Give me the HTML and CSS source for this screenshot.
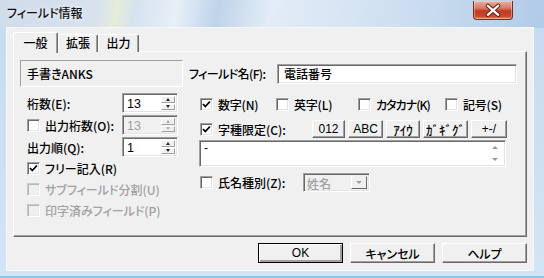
FILE: index.html
```html
<!DOCTYPE html>
<html lang="ja">
<head>
<meta charset="utf-8">
<title>フィールド情報</title>
<link rel="stylesheet" href="styles.css">
</head>
<body>
<div class="window">
  <div class="titlebar">
    <span class="title">フィールド情報</span>
    <span class="close">
      <svg width="40" height="19" viewBox="0 0 40 19">
        <path d="M14.5 4.5 L25.5 14 M25.5 4.5 L14.5 14" stroke="#5a1a10" stroke-width="4.4" stroke-linecap="round" fill="none"/>
        <path d="M14.5 4.5 L25.5 14 M25.5 4.5 L14.5 14" stroke="#ffffff" stroke-width="2.4" stroke-linecap="round" fill="none"/>
      </svg>
    </span>
  </div>
  <div class="framebody">
    <div class="client">
      <div class="tabs">
        <div class="tab active">一般</div>
        <div class="tab">拡張</div>
        <div class="tab">出力</div>
      </div>
      <div class="panel">
        <div class="col-left">
          <div class="static">手書きANKS</div>
          <div class="spinrows">
            <div class="srow">
              <span class="lbl">桁数(E):</span>
              <div class="spin"><span class="val">13</span><span class="spinbtns"><span class="sb up"></span><span class="sb dn"></span></span></div>
            </div>
            <div class="srow">
              <span class="lbl"><span class="cb"></span><span class="cbtext">出力桁数(O):</span></span>
              <div class="spin disabled"><span class="val">13</span><span class="spinbtns"><span class="sb up"></span><span class="sb dn"></span></span></div>
            </div>
            <div class="srow">
              <span class="lbl">出力順(Q):</span>
              <div class="spin"><span class="val">1</span><span class="spinbtns"><span class="sb up"></span><span class="sb dn"></span></span></div>
            </div>
          </div>
          <div class="chkrows">
            <div class="crow"><span class="cb checked"><svg width="9" height="9" viewBox="0 0 9 9"><path d="M1 4 L3.3 6.5 L8 1.5" stroke="#000" stroke-width="1.8" fill="none"/></svg></span><span class="cbtext">フリー記入(R)</span></div>
            <div class="crow disabled"><span class="cb"></span><span class="cbtext">サブフィールド分割(U)</span></div>
            <div class="crow disabled"><span class="cb"></span><span class="cbtext">印字済みフィールド(P)</span></div>
          </div>
        </div>
        <div class="col-right">
          <div class="namerow">
            <span class="lbl">フィールド名(F):</span>
            <div class="edit">電話番号</div>
          </div>
          <div class="typerow">
            <div class="crow"><span class="cb checked"><svg width="9" height="9" viewBox="0 0 9 9"><path d="M1 4 L3.3 6.5 L8 1.5" stroke="#000" stroke-width="1.8" fill="none"/></svg></span><span class="cbtext">数字(N)</span></div>
            <div class="crow"><span class="cb"></span><span class="cbtext">英字(L)</span></div>
            <div class="crow"><span class="cb"></span><span class="cbtext kana">カタカナ(K)</span></div>
            <div class="crow"><span class="cb"></span><span class="cbtext">記号(S)</span></div>
          </div>
          <div class="limitrow">
            <div class="crow limitchk"><span class="cb checked"><svg width="9" height="9" viewBox="0 0 9 9"><path d="M1 4 L3.3 6.5 L8 1.5" stroke="#000" stroke-width="1.8" fill="none"/></svg></span><span class="cbtext">字種限定(C):</span></div>
            <div class="tbtns">
              <span class="btn b1">012</span>
              <span class="btn b2">ABC</span>
              <span class="btn b3">ｱｲｳ</span>
              <span class="btn b4">ｶﾞｷﾞｸﾞ</span>
              <span class="btn b5">+-/</span>
            </div>
          </div>
          <div class="memo">
            <span class="memotext">-</span>
            <span class="vscroll"><span class="arr aup"></span><span class="arr adn"></span></span>
          </div>
          <div class="namekind">
            <div class="crow kindchk"><span class="cb"></span><span class="cbtext">氏名種別(Z):</span></div>
            <div class="combo"><span class="comboval">姓名</span><span class="combobtn"></span></div>
          </div>
        </div>
      </div>
      <div class="buttons">
        <span class="pbtn default">OK</span>
        <span class="pbtn">キャンセル</span>
        <span class="pbtn">ヘルプ</span>
      </div>
    </div>
  </div>
</div>
</body>
</html>
```
FILE: styles.css
```css
* { box-sizing: border-box; }
html, body { margin: 0; padding: 0; }
body {
  width: 544px;
  height: 278px;
  overflow: hidden;
  font-family: "Noto Sans CJK JP", "Noto Sans", sans-serif;
  font-size: 12px;
  font-weight: 500;
  font-feature-settings: "palt";
  color: #000;
  background: #c9dcf0;
}

.window {
  width: 544px;
  height: 278px;
  display: flex;
  flex-direction: column;
  background: linear-gradient(100deg, #cfdcea 0%, #d8e2ed 17%, #e6edd8 20%, #d5e2ef 23%, #e7eff8 30%, #bfd3e9 37%, #e3ecf7 46%, #d6e4f3 60%, #c5d9ee 76%, #b3cde9 90%, #a9c6e6 100%);
}

.titlebar {
  height: 28px;
  display: flex;
  align-items: flex-start;
  padding-left: 7px;
  flex: none;
}
.title {
  margin-top: 5px;
  font-size: 12px;
  line-height: 16px;
  color: #111;
  text-shadow: 0 0 6px rgba(255,255,255,0.9);
}
.close {
  margin-left: auto;
  margin-right: 31px;
  margin-top: 1px;
  width: 40px;
  height: 19px;
  border: 1px solid #7a2a1e;
  border-top: none;
  border-radius: 0 0 4px 4px;
  background: linear-gradient(#eab0a2 0%, #d97a64 40%, #c23a22 55%, #c9482c 85%, #e08a5a 100%);
  box-shadow: inset 0 0 0 1px rgba(255,255,255,0.35);
  display: flex;
}

.framebody {
  flex: 1;
  padding: 0 11px 8px 7px;
  display: flex;
  background: linear-gradient(#c7dbf0, #d3e4f6);
  box-shadow: inset 0 -2px 0 #86c8ec;
}

.client {
  flex: 1;
  background: #f0f0f0;
  padding: 3px 6px 7px 6px;
  display: flex;
  flex-direction: column;
  box-shadow: 0 0 0 1px #f4f8fc;
}

/* tabs */
.tabs {
  display: flex;
  align-items: flex-end;
  height: 21px;
  position: relative;
  z-index: 2;
}
.tab {
  height: 18px;
  padding: 0;
  line-height: 16px;
  white-space: nowrap;
  background: #f0f0f0;
  border-top: 1px solid #fff;
  border-left: 1px solid #fff;
  border-right: 1px solid #696969;
  box-shadow: inset -1px 0 0 #a0a0a0;
  border-radius: 2px 2px 0 0;
  text-align: center;
}
.tab:nth-child(2) { width: 40px; }
.tab:nth-child(3) { width: 41px; }
.tab.active {
  width: 45px;
  height: 21px;
  line-height: 20px;
  margin-bottom: -1px;
}

.panel {
  height: 186px;
  margin-top: -1px;
  border-top: 1px solid #fff;
  border-left: 1px solid #fff;
  border-right: 1px solid #696969;
  border-bottom: 1px solid #696969;
  box-shadow: inset -1px -1px 0 #a0a0a0;
  display: grid;
  grid-template-columns: 163px 328px;
  column-gap: 6px;
  padding: 8px 0 0 6px;
  align-content: start;
  align-items: start;
}

/* generic 3D */
.static {
  height: 27px;
  border: 1px solid;
  border-color: #a0a0a0 #fff #fff #a0a0a0;
  padding-left: 6px;
  display: flex;
  align-items: center;
}
.edit, .spin, .memo, .combo {
  border: 1px solid;
  border-color: #a0a0a0 #fff #fff #a0a0a0;
  box-shadow: inset 1px 1px 0 #696969, inset -1px -1px 0 #e3e3e3;
  background: #fff;
}

.cb {
  width: 13px;
  height: 13px;
  flex: none;
  border: 1px solid;
  border-color: #a0a0a0 #fff #fff #a0a0a0;
  box-shadow: inset 1px 1px 0 #696969, inset -1px -1px 0 #e3e3e3;
  background: #fff;
  display: flex;
  align-items: center;
  justify-content: center;
}
.cb svg { display: block; }
.crow {
  display: flex;
  align-items: center;
}
.crow .cbtext { margin-left: 5px; white-space: nowrap; }
.crow.disabled { color: #a0a0a0; }
.crow.disabled .cb {
  background: #f0f0f0;
  border-color: #c8c8c8 #fff #fff #c8c8c8;
  box-shadow: inset 1px 1px 0 #b4b4b4, inset -1px -1px 0 #eaeaea;
}

/* left column */
.col-left { display: flex; flex-direction: column; }
.spinrows {
  margin-top: 6px;
  display: flex;
  flex-direction: column;
  gap: 2px;
}
.srow {
  height: 20px;
  display: flex;
  align-items: center;
  justify-content: space-between;
  padding: 0 5px 0 7px;
}
.srow .lbl { display: flex; align-items: center; white-space: nowrap; }
.srow .lbl .cbtext { margin-left: 5px; }
.spin {
  width: 56px;
  height: 20px;
  display: flex;
  padding: 2px;
}
.val {
  flex: 1;
  font-family: "Liberation Sans", Arial, sans-serif;
  font-weight: 400;
  font-size: 12.5px;
  line-height: 16px;
  padding-left: 2px;
}
.spin.disabled { background: #f0f0f0; }
.spin.disabled .val { color: #a0a0a0; }
.spinbtns {
  width: 14px;
  display: flex;
  flex-direction: column;
  gap: 1px;
}
.sb {
  flex: 1;
  background: #f0f0f0;
  border: 1px solid;
  border-color: #fff #a0a0a0 #a0a0a0 #fff;
  display: flex;
  align-items: center;
  justify-content: center;
}
.sb::after {
  content: "";
  width: 0;
  height: 0;
  border-left: 2.5px solid transparent;
  border-right: 2.5px solid transparent;
}
.sb.up::after { border-bottom: 3px solid #222; }
.sb.dn::after { border-top: 3px solid #222; }
.spin.disabled .sb.up::after { border-bottom-color: #b0b0b0; }
.spin.disabled .sb.dn::after { border-top-color: #b0b0b0; }

.chkrows {
  margin-top: 1px;
  display: flex;
  flex-direction: column;
  gap: 1px;
}
.chkrows .crow { height: 20px; padding-left: 7px; }

/* right column */
.col-right { display: flex; flex-direction: column; }
.namerow {
  height: 27px;
  display: flex;
  align-items: center;
  justify-content: space-between;
}
.namerow .lbl { white-space: nowrap; letter-spacing: -0.6px; }
.edit {
  width: 240px;
  height: 20px;
  padding-left: 6px;
  line-height: 18px;
}

.typerow {
  margin-top: 7px;
  height: 20px;
  display: grid;
  grid-template-columns: 76px 82px 87px auto;
  padding-left: 11px;
}
.typerow .cbtext { letter-spacing: -0.2px; }
.typerow .cbtext.kana { letter-spacing: -1px; }
.limitrow {
  margin-top: 6px;
  height: 18px;
  display: flex;
  align-items: center;
  padding-left: 11px;
}
.limitchk { width: 112px; }
.tbtns { display: flex; gap: 3px; height: 18px; }
.btn {
  height: 18px;
  display: flex;
  align-items: center;
  justify-content: center;
  background: #f0f0f0;
  border: 1px solid;
  border-color: #fff #696969 #696969 #fff;
  box-shadow: inset -1px -1px 0 #a0a0a0;
  font-family: "Liberation Sans", Arial, sans-serif;
  font-weight: 400;
  font-size: 12px;
}
.b1 { width: 33px; }
.b2 { width: 35px; }
.b3, .b4 {
  font-family: "Noto Sans CJK JP", sans-serif;
  font-feature-settings: normal;
  font-size: 13px;
  font-weight: 500;
}
.b3 { width: 34px; }
.b4 { width: 45px; }
.b5 { width: 36px; }

.memo {
  margin-top: 2px;
  margin-left: 10px;
  width: 307px;
  height: 27px;
  display: flex;
  padding: 2px;
}
.memotext {
  flex: 1;
  line-height: 10px;
  padding-left: 2px;
  font-family: "Liberation Sans", Arial, sans-serif;
}
.vscroll {
  width: 16px;
  display: flex;
  flex-direction: column;
  justify-content: space-between;
  align-items: center;
  padding: 3px 0;
}
.arr {
  width: 0;
  height: 0;
  border-left: 3px solid transparent;
  border-right: 3px solid transparent;
}
.aup { border-bottom: 3px solid #9a9a9a; }
.adn { border-top: 3px solid #9a9a9a; }

.namekind {
  margin-top: 6px;
  height: 19px;
  display: flex;
  align-items: center;
  padding-left: 11px;
}
.kindchk { width: 103px; }
.combo {
  width: 67px;
  height: 19px;
  display: flex;
  background: #f0f0f0;
  padding: 2px;
}
.comboval {
  flex: 1;
  color: #a0a0a0;
  line-height: 15px;
  padding-left: 1px;
}
.combobtn {
  width: 16px;
  background: #f0f0f0;
  border: 1px solid;
  border-color: #f0f0f0 #696969 #696969 #fff;
  display: flex;
  align-items: center;
  justify-content: center;
}
.combobtn::after {
  content: "";
  width: 0;
  height: 0;
  border-left: 3.5px solid transparent;
  border-right: 3.5px solid transparent;
  border-top: 3.5px solid #a0a0a0;
}

/* bottom buttons */
.buttons {
  margin-top: 6px;
  height: 20px;
  display: flex;
  justify-content: flex-end;
  gap: 7px;
}
.pbtn {
  width: 85px;
  height: 20px;
  display: flex;
  align-items: center;
  justify-content: center;
  background: #f0f0f0;
  border: 1px solid;
  border-color: #fff #696969 #696969 #fff;
  box-shadow: inset -1px -1px 0 #a0a0a0;
  font-size: 12px;
}
.pbtn.default {
  border: 1px solid #000;
  box-shadow: inset 1px 1px 0 #fff, inset -2px -2px 0 #a0a0a0, inset -1px -1px 0 #696969;
  font-family: "Liberation Sans", Arial, sans-serif;
  font-weight: 400;
  font-size: 12px;
}
```
